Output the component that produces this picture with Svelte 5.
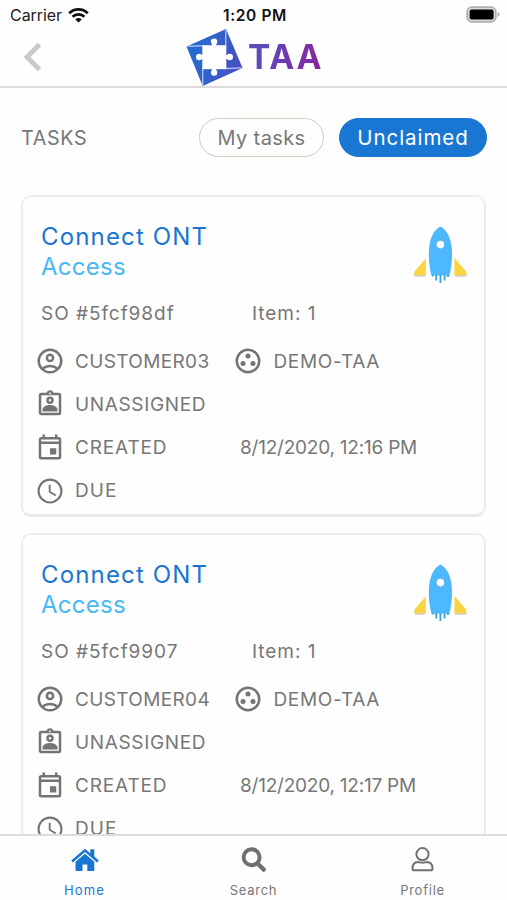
<script>
  const tasks = [
    { so: 'SO #5fcf98df', customer: 'CUSTOMER03', created: '8/12/2020, 12:16 PM' },
    { so: 'SO #5fcf9907', customer: 'CUSTOMER04', created: '8/12/2020, 12:17 PM' }
  ];
</script>

<div class="screen">
  <div class="status">
    <div class="carrier">
      <span>Carrier</span>
      <svg width="21" height="15" viewBox="0 0 21 15" fill="none" stroke="#111" stroke-width="2.8">
        <path d="M1.2 5.3a13.2 13.2 0 0 1 18.6 0M4.6 8.8a8.3 8.3 0 0 1 11.8 0" />
        <path d="M10.5 14.6 7.3 11.4a4.6 4.6 0 0 1 6.4 0z" fill="#111" stroke="none" />
      </svg>
    </div>
    <span class="time">1:20 PM</span>
    <svg class="battery" width="34" height="18" viewBox="0 0 34 18">
      <rect x="1.2" y="1.2" width="28.6" height="14.6" rx="4.5" fill="#ddd" stroke="#b0b0b0" stroke-width="1.8" />
      <rect x="3.6" y="3.6" width="24" height="10" rx="2" fill="#000" />
      <path d="M31.6 6v5q2-.6 2-2.5T31.6 6z" fill="#aaa" />
    </svg>
  </div>

  <header>
    <svg class="back" width="20" height="30" viewBox="0 0 20 30" fill="none" stroke="#c9c9c9" stroke-width="4.8">
      <path d="M16.500 2.500 4 15l12.500 12.500" />
    </svg>
    <div class="brand">
      <svg width="58" height="58" viewBox="185 28 58 58">
        <defs>
          <linearGradient id="mark" x1="0" y1="0" x2="1" y2="0.3">
            <stop offset="0" stop-color="#1c72d0" />
            <stop offset="1" stop-color="#4652c4" />
          </linearGradient>
        </defs>
        <path d="M226 29 186.5 46.5 202.7 86 242.6 68z" fill="url(#mark)" />
        <path d="M202.3 45.200h24v24h-24z" fill="#fff" />
        <g fill="#fff">
          <circle cx="214.1" cy="41.6" r="3.2" /><circle cx="199.2" cy="57" r="3.2" />
          <circle cx="229.8" cy="57" r="3.2" /><circle cx="214.1" cy="72.6" r="3.2" />
          <path d="M212.1 43h4v28h-4zM200 55h29v4h-29z" />
        </g>
        <path d="M187.5 46.2 203 45.8M225.8 30v16M225.4 68.5l16-.6M202.8 68v17" stroke="#dbe6fa" stroke-width="1" />
      </svg>
      <span class="name">TAA</span>
    </div>
  </header>

  <main>
    <div class="filters">
      <h1>TASKS</h1>
      <button class="pill mine"><span>My tasks</span></button>
      <button class="pill active"><span>Unclaimed</span></button>
    </div>

    {#each tasks as task}
      <article>
        <svg class="rocket" width="54" height="60" viewBox="413 225 54 60">
          <g fill="#bdbdbd" opacity=".7" transform="translate(0 1)">
            <path d="M425.5 259v16.8h-11v-3.5zM455 258v17.8h11.5v-3.5z" />
          </g>
          <path d="M425.7 258.5v16.7h-11.400v-3.400zM454.400 258v17.200h12v-3.400z" fill="#fbd53f" />
          <path d="M440.400 226.500c7.500 3.500 11.600 14 11.600 27.500q0 12-2.600 21.500h-18q-2.600-9.500-2.600-21.500c0-13.500 4.100-24 11.600-27.500z" fill="#4db8fd" />
          <path d="M436.200 275v5.500M440.400 275v8M444.600 275v5.500M432.800 275v1.500M448 275v2" stroke="#36a4dc" stroke-width="1.800" />
          <circle cx="440.400" cy="244.600" r="3.800" fill="#fff" />
        </svg>
        <h2>Connect ONT</h2>
        <h3>Access</h3>
        <div class="order"><span class="so">{task.so}</span><span class="item">Item: 1</span></div>
        <div class="row">
          <svg class="icon" viewBox="0 0 24 24">
            <path d="M12 2a10 10 0 1 0 0 20 10 10 0 0 0 0-20zM7.350 18.500C8.660 17.560 10.260 17 12 17s3.340.560 4.650 1.500C15.340 19.440 13.740 20 12 20s-3.340-.560-4.650-1.500zm10.790-1.380C16.450 15.800 14.320 15 12 15s-4.450.800-6.140 2.120A8 8 0 1 1 18.140 17.120zM12 6a3.500 3.500 0 1 0 0 7 3.500 3.500 0 0 0 0-7zm0 5a1.500 1.500 0 1 1 0-3 1.500 1.500 0 0 1 0 3z" />
          </svg>
          <span class="customer">{task.customer}</span>
          <svg class="icon group" viewBox="0 0 24 24">
            <path d="M12 2a10 10 0 1 0 0 20 10 10 0 0 0 0-20zm0 18a8 8 0 1 1 0-16 8 8 0 0 1 0 16z" />
            <circle cx="8" cy="14" r="2" /><circle cx="12" cy="8" r="2" /><circle cx="16" cy="14" r="2" />
          </svg>
          <span class="project">DEMO-TAA</span>
        </div>
        <div class="row">
          <svg class="icon" viewBox="0 0 24 24">
            <path d="M19 3h-4.180a3 3 0 0 0-5.640 0H5a2 2 0 0 0-2 2v14c0 1.100.900 2 2 2h14a2 2 0 0 0 2-2V5a2 2 0 0 0-2-2zm-7-.250a.750.750 0 1 1 0 1.500.750.750 0 0 1 0-1.500zM19 19H5V5h14v14zM12 6a3 3 0 1 0 0 6 3 3 0 0 0 0-6zm0 4a1 1 0 1 1 0-2 1 1 0 0 1 0 2zm-6 6.470V18h12v-1.530c0-2.500-3.970-3.580-6-3.580s-6 1.070-6 3.580z" />
          </svg>
          <span class="unassigned">UNASSIGNED</span>
        </div>
        <div class="row">
          <svg class="icon" viewBox="0 0 24 24">
            <path d="M19 4h-1V2h-2v2H8V2H6v2H5a2 2 0 0 0-2 2v14a2 2 0 0 0 2 2h14a2 2 0 0 0 2-2V6a2 2 0 0 0-2-2zm0 16H5V9.500h14V20zm0-12.500H5V6h14v1.500zM12 13h5v5h-5z" />
          </svg>
          <span class="created">CREATED</span>
          <span class="date">{task.created}</span>
        </div>
        <div class="row">
          <svg class="icon" viewBox="0 0 24 24">
            <path d="M12 2a10 10 0 1 0 0 20 10 10 0 0 0 0-20zm0 18.300a8.300 8.300 0 1 1 0-16.600 8.300 8.300 0 0 1 0 16.600zM12.500 7H11v6l5.250 3.150.750-1.230-4.500-2.670z" />
          </svg>
          <span class="due">DUE</span>
        </div>
      </article>
    {/each}
  </main>

  <nav>
    <div class="tab home">
      <svg width="30" height="26" viewBox="0 0 30 26">
        <path d="M15 6.700 5.500 14.700V23q0 1 1 1h6v-6.500h4.800V24h6q1 0 1-1v-8.300z" />
        <path d="M15 1.700 20.300 6.200V2.200h4v7.400l4.500 3.800-1.700 2L15 5.100 2.800 15.400l-1.600-2z" />
      </svg>
      <span>Home</span>
    </div>
    <div class="tab search">
      <svg width="30" height="26" viewBox="0 0 30 26" fill="none" stroke="#6f6f6f">
        <circle cx="12.600" cy="10.300" r="8" stroke-width="3.900" />
        <path d="m18.300 16.300 6.500 6.300" stroke-width="4.300" stroke-linecap="round" />
      </svg>
      <span>Search</span>
    </div>
    <div class="tab profile">
      <svg width="30" height="26" viewBox="0 0 30 26" fill="none" stroke="#707070" stroke-width="2">
        <circle cx="14.500" cy="7.200" r="6.100" />
        <path d="M9.500 15c2 0 3 .8 5 .8s3-.8 5-.8q5 .8 5 6.400 0 1.900-1.900 1.900H6.400q-1.900 0-1.900-1.900Q4.500 15.800 9.500 15z" />
      </svg>
      <span>Profile</span>
    </div>
  </nav>
</div>

<style>
  :global(body) { margin: 0; background: #fff; }
  .screen {
    width: 507px; height: 900px; display: flex; flex-direction: column; overflow: hidden;
    background: #fefefe; color: #777; font-family: Inter, "Liberation Sans", sans-serif; font-size: 19px;
  }
  span, h1, h2, h3 { white-space: nowrap; }
  .status {
    height: 30px; flex: none; display: grid; grid-template-columns: 1fr auto 1fr; align-items: center;
    box-sizing: border-box; padding: 0 7px 0 10px; color: #222; font-size: 16px;
  }
  .carrier { display: flex; align-items: center; gap: 6px; letter-spacing: -.05px; }
  .time { font-weight: 600; font-size: 15.500px; letter-spacing: .6px; color: #111; }
  .battery { justify-self: end; margin-top: -1px; }
  header {
    height: 58px; flex: none; box-sizing: border-box; border-bottom: 2px solid #dcdcdc;
    display: grid; grid-template-columns: 185px 1fr; align-items: start;
  }
  .back { margin: 12px 0 0 23px; }
  .brand { display: flex; align-items: center; margin-top: -2px; }
  .name {
    margin-left: 5px; font-size: 33.500px; font-weight: 700; line-height: 58px; letter-spacing: 1.800px;
    background: linear-gradient(90deg, #554fbf, #8a259e); background-clip: text; -webkit-background-clip: text; color: transparent;
  }
  main { flex: 1; min-height: 0; overflow: hidden; padding: 30px 21px 0; }
  .filters { display: flex; align-items: center; height: 39px; margin: 0 -1px 38px 0; }
  h1 { flex: 1; margin: 0; font-size: 19.700px; font-weight: 400; letter-spacing: .7px; }
  .pill {
    height: 39px; box-sizing: border-box; border-radius: 20px; padding: 0; font: inherit; font-size: 20px;
    border: 1.500px solid #cdcdc2; background: #fefefe; color: #777;
  }
  .mine { width: 125px; letter-spacing: .4px; }
  .active {
    width: 148px; margin-left: 15px; border-color: #1976d2; background: #1976d2; color: #fff;
    font-size: 20.500px; letter-spacing: .95px;
  }
  article {
    position: relative; box-sizing: border-box; height: 322px; margin-bottom: 16px; padding: 25px 0 0 14px;
    border: 2px solid #eee; border-bottom: 3px solid #e9e9e9; border-radius: 10px;
  }
  .rocket { position: absolute; right: 17px; top: 28px; }
  h2, h3 { margin: 0 0 0 4px; font-size: 24px; line-height: 30px; font-weight: 400; }
  h2 { color: #1976d2; letter-spacing: 1.150px; }
  h3 { color: #4ab8f5; letter-spacing: .250px; }
  .order { display: flex; height: 30px; align-items: center; margin: 16.500px 0 11px 4px; }
  .so, .item { letter-spacing: .95px; }
  .so { width: 211px; }
  .row { height: 43.200px; display: flex; align-items: center; }
  .icon { width: 30px; height: 30px; margin-left: -2.500px; margin-right: 10.500px; flex: none; fill: #747474; }
  .customer { width: 160px; letter-spacing: .350px; }
  .group { margin-left: -2px; }
  .project { letter-spacing: .650px; }
  .unassigned { letter-spacing: .650px; }
  .created { width: 165px; letter-spacing: .850px; }
  .date { letter-spacing: -.220px; }
  .due { letter-spacing: 1.100px; }
  nav {
    height: 66px; flex: none; box-sizing: border-box; border-top: 2px solid #dcdcdc;
    display: grid; grid-template-columns: repeat(3, 1fr);
  }
  .tab { display: flex; flex-direction: column; align-items: center; padding-top: 11px; font-size: 13px; }
  .tab span { margin-top: 8px; line-height: 18px; letter-spacing: .750px; }
  .home { color: #1976d2; fill: #1976d2; }
  .home span { letter-spacing: 1.200px; }
</style>
